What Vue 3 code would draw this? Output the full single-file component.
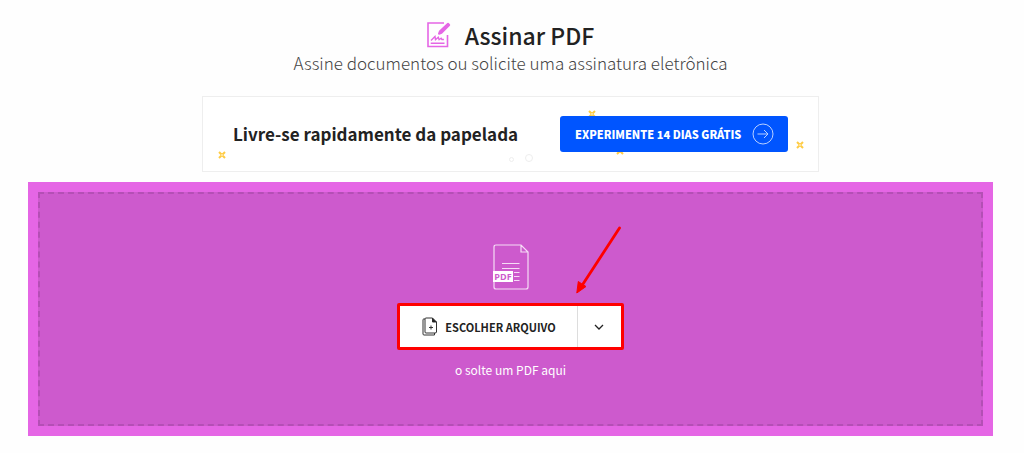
<script setup>
const sparks = ['s1', 's2', 's3', 's4']
</script>

<template>
  <main class="page">
    <header class="head">
      <h1 class="title">
        <svg class="title-icon" viewBox="0 0 24 26" aria-hidden="true">
          <path d="M17 1H1v23.500h19.500V13" fill="none" stroke="#e566e5" stroke-width="1.600" />
          <path d="M21 1.800 22.200 3 14.500 10.700 12 11.700 13 9.200Z" fill="#e566e5" stroke="#e566e5" stroke-width="2" stroke-linejoin="round" />
          <path d="M4 18.500 8 14.500l.5 3.200 2.800-2.500.8 2.500 2-1.400.8 1.200h2M3.700 21.300H17.500" fill="none" stroke="#e566e5" stroke-width="1.400" />
        </svg>
        <span>Assinar PDF</span>
      </h1>
      <p class="subtitle">Assine documentos ou solicite uma assinatura eletrônica</p>
    </header>

    <section class="banner">
      <svg v-for="s in sparks" :key="s" class="spark" :class="s" viewBox="0 0 8 8" aria-hidden="true">
        <path d="M1 1 3 3M7 1 5 3M1 7 3 5M7 7 5 5M3 3 5 5M5 3 3 5" stroke="#fc4" stroke-width="2" />
        <circle cx="4" cy="4" r=".8" fill="#fff" />
      </svg>
      <i class="ring small"></i>
      <i class="ring large"></i>
      <h2 class="banner-text">Livre-se rapidamente da papelada</h2>
      <a class="trial" href="#">
        <span>EXPERIMENTE 14 DIAS GRÁTIS</span>
        <svg class="trial-icon" viewBox="0 0 22 22" aria-hidden="true">
          <g fill="none" stroke="#b9d0ff" stroke-width="1">
            <circle cx="11" cy="11" r="10" />
            <path d="M5.500 11h10.500M12 7l4 4-4 4" />
          </g>
        </svg>
      </a>
    </section>

    <section class="drop">
      <div class="drop-inner">
        <svg class="file-icon" viewBox="0 0 37 46" aria-hidden="true">
          <g fill="none" stroke="#f6dcf6" stroke-width="1.200">
            <path d="M29 1H4Q2 1 2 3V43Q2 45 4 45H34Q36 45 36 43V8ZM29 1V8H36" />
            <path d="M10 19.500H27.500M10 24.500H27.500M22 28.500H27.500M22 32.500H27.500M22 36.500H27.500" />
          </g>
          <rect x="1" y="27" width="20" height="11" fill="#fff" />
          <text x="11" y="35.500" text-anchor="middle" class="file-label">PDF</text>
        </svg>
        <div class="picker">
          <button class="choose" type="button">
            <svg class="choose-icon" viewBox="0 0 16 19" aria-hidden="true">
              <g fill="none" stroke="#333" stroke-width="1">
                <path d="M10.500 1H4Q3 1 3 2V15Q3 16 4 16H13Q14.500 16 14.500 15V5ZM10.500 1V5H14.500" />
                <path d="M3 2H1.500Q1 2 1 3V17Q1 18 2 18H12.500V16M7 10.500H11M9 8.500V12.500" />
              </g>
              <path d="M10.500 1V5H14.500Z" fill="#222" />
            </svg>
            <span>ESCOLHER ARQUIVO</span>
          </button>
          <button class="more" type="button" aria-label="Mais opções">
            <svg class="chevron" viewBox="0 0 10 6" aria-hidden="true">
              <path d="M1 1l4 4 4-4" fill="none" stroke="#222" stroke-width="1.300" />
            </svg>
          </button>
          <svg class="arrow" viewBox="0 0 46 70" aria-hidden="true">
            <path d="M43.500 2 7 58" stroke="#f00" stroke-width="2.800" stroke-linecap="round" />
            <path d="M.8 67 2.300 55.500 6 58 10 60.500Z" fill="#f00" stroke="#f00" />
          </svg>
        </div>
        <p class="hint">o solte um PDF aqui</p>
      </div>
    </section>
  </main>
</template>

<style>
body {
  background: #fefefe;
}
</style>

<style scoped>
.page {
  padding: 20px 31px 16px 28px;
  font-family: "Noto Sans CJK SC", "Noto Sans", sans-serif;
  color: #222;
}
.head {
  text-align: center;
}
.title {
  display: flex;
  justify-content: center;
  align-items: center;
  gap: 14px;
  margin: 0;
  font-size: 23px;
  line-height: 30px;
  font-weight: 500;
}
.title-icon {
  width: 24px;
  height: 26px;
}
.subtitle {
  margin: 0;
  font-size: 17px;
  line-height: 26px;
  font-weight: 200;
  color: #444;
}
.banner {
  position: relative;
  display: flex;
  align-items: center;
  justify-content: space-between;
  box-sizing: border-box;
  max-width: 617px;
  height: 76px;
  margin: 20px auto 10px;
  padding: 0 30px;
  border: 1px solid #eee;
  background: #fff;
}
.banner-text {
  margin: 0;
  font-size: 17px;
  line-height: 24px;
  font-weight: 700;
}
.trial {
  position: relative;
  display: flex;
  align-items: center;
  justify-content: space-between;
  box-sizing: border-box;
  width: 228px;
  height: 36px;
  padding: 0 14px 0 15px;
  border-radius: 3px;
  background: #0055ff;
  color: #fff;
  font-size: 11px;
  line-height: 18px;
  font-weight: 900;
  text-decoration: none;
  white-space: nowrap;
}
.trial-icon {
  width: 22px;
  height: 22px;
}
.spark {
  position: absolute;
  width: 8px;
  height: 8px;
}
.s1 { left: 15px; bottom: 12px; }
.s2 { right: 222px; top: 13px; }
.s3 { right: 194px; bottom: 16px; }
.s4 { right: 14px; top: 44px; }
.ring {
  position: absolute;
  box-sizing: border-box;
  border: 1px solid #eee;
  border-radius: 50%;
}
.small {
  right: 304px;
  bottom: 9px;
  width: 5px;
  height: 5px;
}
.large {
  right: 285px;
  bottom: 9px;
  width: 8px;
  height: 8px;
}
.drop {
  padding: 10px;
  background: #e566e5;
}
.drop-inner {
  display: flex;
  flex-direction: column;
  align-items: center;
  box-sizing: border-box;
  min-height: 234px;
  padding-top: 50px;
  border: 2px dashed #b44fb5;
  background: #cd5acd;
}
.file-icon {
  width: 37px;
  height: 46px;
}
.file-label {
  font-family: "Open Sans", sans-serif;
  font-size: 9px;
  font-weight: 700;
  fill: #cd5acd;
}
.picker {
  position: relative;
  display: flex;
  margin-top: 13px;
  border: 3px solid #f00;
  border-radius: 2px;
  background: #fff;
}
.choose,
.more {
  display: flex;
  align-items: center;
  justify-content: center;
  height: 41px;
  margin: 0;
  padding: 0;
  border: 0;
  background: #fff;
  color: #222;
  font-family: inherit;
}
.choose {
  gap: 7px;
  padding: 0 21px 0 22px;
  font-size: 11px;
  line-height: 18px;
  font-weight: 700;
}
.choose-icon {
  width: 16px;
  height: 19px;
}
.more {
  width: 44px;
  border-left: 1px solid #ddd;
}
.chevron {
  width: 10px;
  height: 6px;
}
.arrow {
  position: absolute;
  right: -1px;
  bottom: 51px;
  width: 46px;
  height: 70px;
}
.hint {
  margin: 10px 0 0;
  color: #fff;
  font-size: 12px;
  line-height: 20px;
}
</style>
